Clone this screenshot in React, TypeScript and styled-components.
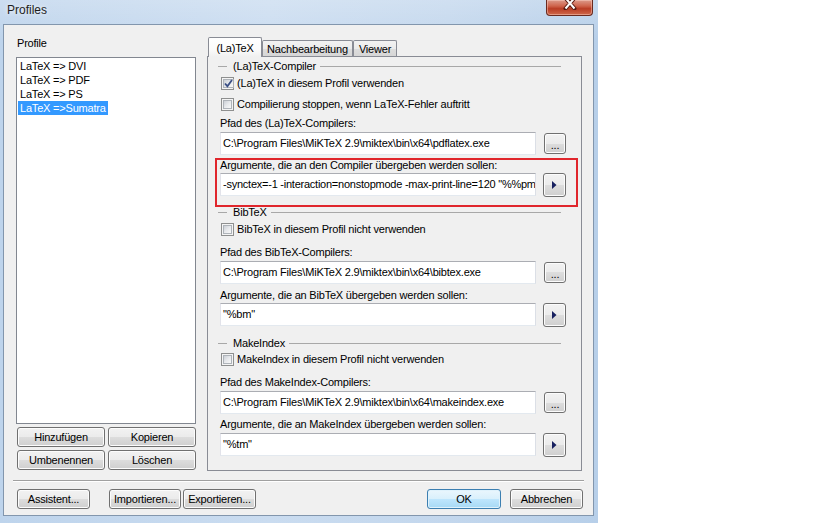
import React from "react";
import styled, { createGlobalStyle, css } from "styled-components";

const GlobalStyle = createGlobalStyle`
  html, body { margin: 0; padding: 0; background: #ffffff; }
  body {
    font-family: "Liberation Sans", Arial, sans-serif;
    font-size: 11px;
    letter-spacing: -0.2px;
    color: #000000;
  }
  *, *::before, *::after { box-sizing: border-box; }
`;

const Window = styled.div`
  width: 598px;
  height: 523px;
  display: flex;
  flex-direction: column;
  padding: 0 4px 7px 3px;
  background:
    linear-gradient(180deg, rgba(255, 255, 255, 0.22) 0px, rgba(255, 255, 255, 0) 40px),
    linear-gradient(90deg, #bed4ec 0%, #cadcf0 45%, #c3d7ed 75%, #b7cfe9 100%);
`;

const TitleBar = styled.div`
  height: 24px;
  flex-shrink: 0;
  display: flex;
  align-items: flex-start;
`;

const Title = styled.div`
  padding: 3px 0 0 4px;
  font-size: 12px;
  line-height: 14px;
  letter-spacing: 0;
  color: #1e1e1e;
  text-shadow: 0 0 5px rgba(255, 255, 255, 0.95);
`;

const CloseButton = styled.div`
  margin-left: auto;
  margin-right: 1px;
  width: 47px;
  height: 16px;
  border: 1px solid #6a2a1f;
  border-top: none;
  border-radius: 0 0 4px 4px;
  background: linear-gradient(180deg, #dc9a8a 0%, #cf644c 40%, #b93c24 58%, #cf6a4c 100%);
  box-shadow: inset 0 0 0 1px rgba(255, 214, 204, 0.45);
  display: flex;
  justify-content: center;
  align-items: flex-start;
`;

const Client = styled.div`
  flex: 1;
  display: flex;
  flex-direction: column;
  border: 1px solid #8296ad;
  background: #f0f0f0;
`;

const MainRow = styled.div`
  height: 434px;
  flex-shrink: 0;
  margin-top: 12px;
  padding: 0 11px 0 12px;
  display: flex;
  gap: 11px;
`;

const LeftColumn = styled.div`
  width: 180px;
  display: flex;
  flex-direction: column;
`;

const ProfileLabel = styled.div`
  height: 20px;
  line-height: 13px;
  padding-left: 1px;
`;

const ListBox = styled.div`
  flex: 1;
  border: 1px solid #828790;
  background: #ffffff;
  padding: 1px 0 0 1px;
`;

const ListItem = styled.div`
  height: 14px;
  line-height: 14px;
`;

const ItemText = styled.span<{ $selected?: boolean }>`
  display: inline-block;
  height: 14px;
  padding: 0 2px;
  white-space: nowrap;
  ${(p) =>
    p.$selected &&
    css`
      background: #3399ff;
      color: #ffffff;
    `}
`;

const ButtonGrid = styled.div`
  display: grid;
  grid-template-columns: 88px 88px;
  grid-auto-rows: 20px;
  gap: 3px;
  margin: 3px 0 1px 1px;
`;

const PushButton = styled.button<{ $w?: number; $h?: number; $default?: boolean; $ml?: number }>`
  width: ${(p) => (p.$w ? `${p.$w}px` : "100%")};
  height: ${(p) => p.$h ?? 20}px;
  margin: 0 0 0 ${(p) => p.$ml ?? 0}px;
  padding: 0;
  flex-shrink: 0;
  font-family: "Liberation Sans", Arial, sans-serif;
  font-size: 11px;
  letter-spacing: -0.2px;
  line-height: 1;
  color: #000000;
  border: 1px solid #707070;
  border-radius: 3px;
  background: linear-gradient(180deg, #f2f2f2 0%, #ebebeb 50%, #dddddd 50%, #cfcfcf 100%);
  box-shadow: inset 0 0 0 1px #fcfcfc;
  display: flex;
  align-items: center;
  justify-content: center;
  ${(p) =>
    p.$default &&
    css`
      border-color: #3c7fb1;
      background: linear-gradient(180deg, #eaf6fd 0%, #d9f0fc 50%, #bee6fd 50%, #a7d9f5 100%);
      box-shadow: inset 0 0 0 1px #dff2fc;
    `}
`;

const TabControl = styled.div`
  width: 375px;
  display: flex;
  flex-direction: column;
`;

const TabStrip = styled.div`
  height: 19px;
  flex-shrink: 0;
  display: flex;
  align-items: flex-end;
  padding-left: 1px;
  position: relative;
  z-index: 1;
`;

const Tab = styled.div<{ $active?: boolean; $w: number }>`
  width: ${(p) => p.$w}px;
  height: ${(p) => (p.$active ? 20 : 16)}px;
  margin-bottom: ${(p) => (p.$active ? -1 : 0)}px;
  padding-top: ${(p) => (p.$active ? 4 : 2)}px;
  line-height: 13px;
  text-align: center;
  white-space: nowrap;
  border: 1px solid #898c95;
  border-bottom: none;
  border-radius: 2px 2px 0 0;
  background: ${(p) =>
    p.$active
      ? "linear-gradient(180deg, #ffffff 0%, #fbfbfb 60%, #f0f0f0 100%)"
      : "linear-gradient(180deg, #f2f2f2 0%, #ebebeb 50%, #dddddd 50%, #d6d6d6 100%)"};
`;

const TabPanel = styled.div`
  flex: 1;
  border: 1px solid #898c95;
  background: #f0f0f0;
  padding: 1px 15px 0 12px;
  display: flex;
  flex-direction: column;
`;

const GroupHeader = styled.div<{ $mt: number }>`
  height: 14px;
  margin: ${(p) => p.$mt}px 5px 0 -2px;
  display: flex;
  align-items: center;
  line-height: 13px;
  white-space: nowrap;
`;

const HeaderDash = styled.span`
  width: 9px;
  margin-right: 6px;
  border-top: 1px solid #a8a8a8;
`;

const HeaderLine = styled.span`
  flex: 1;
  margin-left: 4px;
  border-top: 1px solid #a8a8a8;
`;

const CheckRow = styled.div<{ $mt: number }>`
  height: 13px;
  margin-top: ${(p) => p.$mt}px;
  padding-left: 1px;
  display: flex;
  align-items: center;
  gap: 3px;
  line-height: 13px;
  white-space: nowrap;
`;

const CheckBox = styled.span`
  width: 13px;
  height: 13px;
  flex-shrink: 0;
  border: 1px solid #8e8f8f;
  background: #f4f4f4;
  padding: 1px;
  display: flex;
`;

const CheckInner = styled.span`
  flex: 1;
  border: 1px solid #aeb3b9;
  background: linear-gradient(135deg, #cbcfd5 0%, #e7e9ec 50%, #f8f8f8 100%);
  display: flex;
  align-items: center;
  justify-content: center;
`;

const FieldLabel = styled.div<{ $mt: number }>`
  height: 13px;
  margin-top: ${(p) => p.$mt}px;
  line-height: 13px;
  white-space: nowrap;
`;

const FieldRow = styled.div<{ $mt: number }>`
  height: 23px;
  margin-top: ${(p) => p.$mt}px;
  display: flex;
  align-items: center;
  justify-content: space-between;
`;

const TextBox = styled.div<{ $tight?: boolean }>`
  width: 316px;
  height: 23px;
  border: 1px solid;
  border-color: #abadb3 #dbdfe6 #e3e9ef #e2e3ea;
  background: #ffffff;
  padding: 0 2px;
  line-height: 21px;
  white-space: nowrap;
  overflow: hidden;
  letter-spacing: ${(p) => (p.$tight ? "-0.24px" : "-0.2px")};
`;

const ArgBlock = styled.div<{ $mt: number; $highlight?: boolean }>`
  margin-top: ${(p) => p.$mt}px;
  position: relative;
  ${(p) =>
    p.$highlight &&
    css`
      &::after {
        content: "";
        position: absolute;
        top: -1px;
        left: -5px;
        right: -12px;
        bottom: -11px;
        border: 2px solid #e0262c;
        pointer-events: none;
      }
    `}
`;

const Separator = styled.div`
  height: 2px;
  margin: 9px 9px 0 9px;
  border-top: 1px solid #a0a0a0;
  border-bottom: 1px solid #ffffff;
`;

const ButtonBar = styled.div`
  margin-top: 7px;
  padding: 0 10px 0 13px;
  display: flex;
  align-items: center;
`;

const RightButtons = styled.div`
  margin-left: auto;
  display: flex;
`;

const Dots = styled.span`
  position: relative;
  top: 2px;
`;

const BrowseButton = () => (
  <PushButton $w={22} $h={21}>
    <Dots>...</Dots>
  </PushButton>
);

const ArrowButton = () => (
  <PushButton $w={23} $h={24}>
    <svg width="5" height="8" viewBox="0 0 5 8">
      <polygon points="0,0 4.5,4 0,8" fill="#17205f" />
    </svg>
  </PushButton>
);

const Check = ({ checked }: { checked?: boolean }) => (
  <CheckBox>
    <CheckInner>
      {checked && (
        <svg width="9" height="9" viewBox="0 0 9 9">
          <path d="M1 4.5 L3.4 7.2 L8 1" stroke="#3a4f85" strokeWidth="1.8" fill="none" />
        </svg>
      )}
    </CheckInner>
  </CheckBox>
);

const profiles = ["LaTeX => DVI", "LaTeX => PDF", "LaTeX => PS", "LaTeX =>Sumatra"];

export default function App() {
  return (
    <>
      <GlobalStyle />
      <Window>
        <TitleBar>
          <Title>Profiles</Title>
          <CloseButton>
            <svg width="14" height="10" viewBox="0 0 14 10">
              <path d="M2.5 -2 L11.5 8.5 M11.5 -2 L2.5 8.5" stroke="#5a1c12" strokeWidth="4" strokeLinecap="round" />
              <path d="M2.5 -2 L11.5 8.5 M11.5 -2 L2.5 8.5" stroke="#ffffff" strokeWidth="2" />
            </svg>
          </CloseButton>
        </TitleBar>
        <Client>
          <MainRow>
            <LeftColumn>
              <ProfileLabel>Profile</ProfileLabel>
              <ListBox>
                {profiles.map((p, i) => (
                  <ListItem key={p}>
                    <ItemText $selected={i === 3}>{p}</ItemText>
                  </ListItem>
                ))}
              </ListBox>
              <ButtonGrid>
                <PushButton>Hinzufügen</PushButton>
                <PushButton>Kopieren</PushButton>
                <PushButton>Umbenennen</PushButton>
                <PushButton>Löschen</PushButton>
              </ButtonGrid>
            </LeftColumn>
            <TabControl>
              <TabStrip>
                <Tab $active $w={54}>(La)TeX</Tab>
                <Tab $w={91}>Nachbearbeitung</Tab>
                <Tab $w={44}>Viewer</Tab>
              </TabStrip>
              <TabPanel>
                <GroupHeader $mt={1}>
                  <HeaderDash />
                  (La)TeX-Compiler
                  <HeaderLine />
                </GroupHeader>
                <CheckRow $mt={4}>
                  <Check checked />
                  (La)TeX in diesem Profil verwenden
                </CheckRow>
                <CheckRow $mt={8}>
                  <Check />
                  Compilierung stoppen, wenn LaTeX-Fehler auftritt
                </CheckRow>
                <FieldLabel $mt={6}>Pfad des (La)TeX-Compilers:</FieldLabel>
                <FieldRow $mt={2}>
                  <TextBox>C:\Program Files\MiKTeX 2.9\miktex\bin\x64\pdflatex.exe</TextBox>
                  <BrowseButton />
                </FieldRow>
                <ArgBlock $mt={4} $highlight>
                  <FieldLabel $mt={0}>Argumente, die an den Compiler übergeben werden sollen:</FieldLabel>
                  <FieldRow $mt={1}>
                    <TextBox $tight>-synctex=-1 -interaction=nonstopmode -max-print-line=120 "%%pm</TextBox>
                    <ArrowButton />
                  </FieldRow>
                </ArgBlock>

                <GroupHeader $mt={9}>
                  <HeaderDash />
                  BibTeX
                  <HeaderLine />
                </GroupHeader>
                <CheckRow $mt={4}>
                  <Check />
                  BibTeX in diesem Profil nicht verwenden
                </CheckRow>
                <FieldLabel $mt={10}>Pfad des BibTeX-Compilers:</FieldLabel>
                <FieldRow $mt={2}>
                  <TextBox>C:\Program Files\MiKTeX 2.9\miktex\bin\x64\bibtex.exe</TextBox>
                  <BrowseButton />
                </FieldRow>
                <ArgBlock $mt={5}>
                  <FieldLabel $mt={0}>Argumente, die an BibTeX übergeben werden sollen:</FieldLabel>
                  <FieldRow $mt={1}>
                    <TextBox>"%bm"</TextBox>
                    <ArrowButton />
                  </FieldRow>
                </ArgBlock>

                <GroupHeader $mt={10}>
                  <HeaderDash />
                  MakeIndex
                  <HeaderLine />
                </GroupHeader>
                <CheckRow $mt={3}>
                  <Check />
                  MakeIndex in diesem Profil nicht verwenden
                </CheckRow>
                <FieldLabel $mt={10}>Pfad des MakeIndex-Compilers:</FieldLabel>
                <FieldRow $mt={2}>
                  <TextBox>C:\Program Files\MiKTeX 2.9\miktex\bin\x64\makeindex.exe</TextBox>
                  <BrowseButton />
                </FieldRow>
                <ArgBlock $mt={4}>
                  <FieldLabel $mt={0}>Argumente, die an MakeIndex übergeben werden sollen:</FieldLabel>
                  <FieldRow $mt={2}>
                    <TextBox>"%tm"</TextBox>
                    <ArrowButton />
                  </FieldRow>
                </ArgBlock>
              </TabPanel>
            </TabControl>
          </MainRow>
          <Separator />
          <ButtonBar>
            <PushButton $w={73}>Assistent...</PushButton>
            <PushButton $w={72} $ml={19}>Importieren...</PushButton>
            <PushButton $w={73} $ml={2}>Exportieren...</PushButton>
            <RightButtons>
              <PushButton $w={74} $default>OK</PushButton>
              <PushButton $w={73} $ml={9}>Abbrechen</PushButton>
            </RightButtons>
          </ButtonBar>
        </Client>
      </Window>
    </>
  );
}
